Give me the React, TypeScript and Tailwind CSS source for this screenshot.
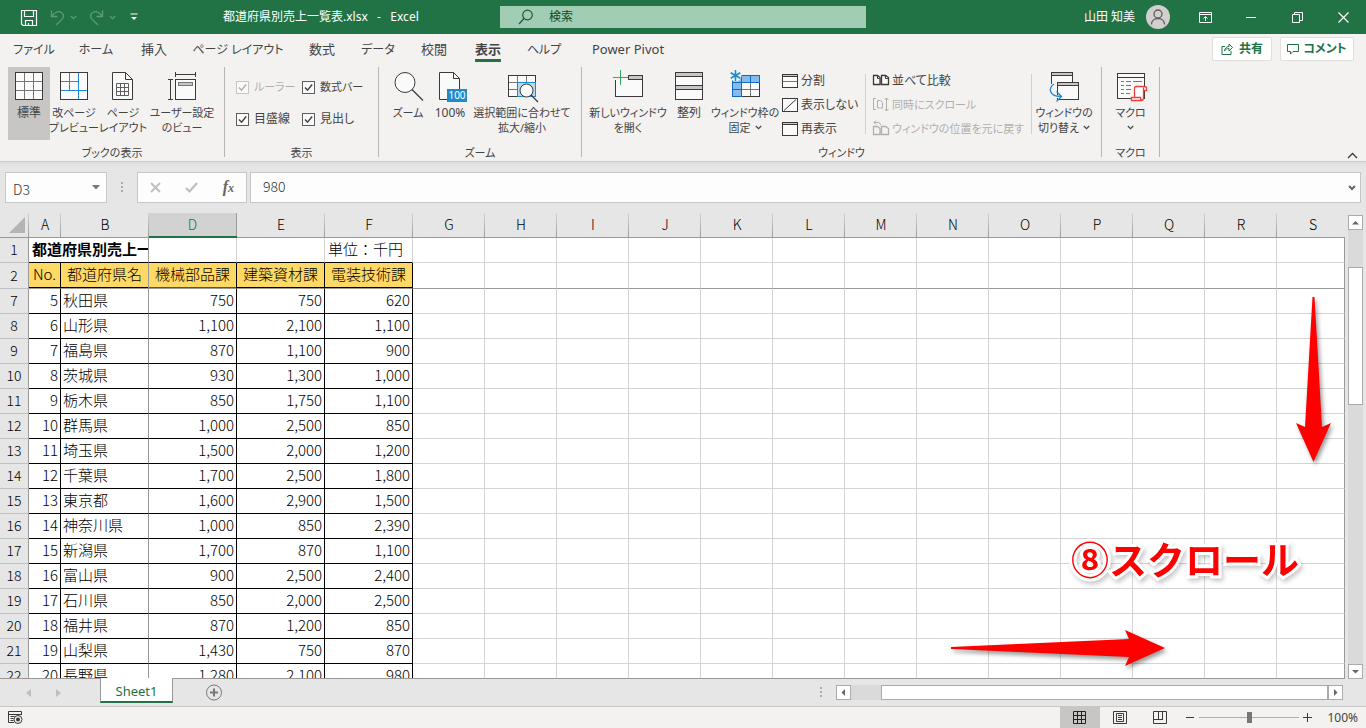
import React from 'react'

type Children = { children?: React.ReactNode }

const columns = ['G', 'H', 'I', 'J', 'K', 'L', 'M', 'N', 'O', 'P', 'Q', 'R', 'S']

const rows: [number, number, string, string, string, string][] = [
  [7, 5, '秋田県', '750', '750', '620'],
  [8, 6, '山形県', '1,100', '2,100', '1,100'],
  [9, 7, '福島県', '870', '1,100', '900'],
  [10, 8, '茨城県', '930', '1,300', '1,000'],
  [11, 9, '栃木県', '850', '1,750', '1,100'],
  [12, 10, '群馬県', '1,000', '2,500', '850'],
  [13, 11, '埼玉県', '1,500', '2,000', '1,200'],
  [14, 12, '千葉県', '1,700', '2,500', '1,800'],
  [15, 13, '東京都', '1,600', '2,900', '1,500'],
  [16, 14, '神奈川県', '1,000', '850', '2,390'],
  [17, 15, '新潟県', '1,700', '870', '1,100'],
  [18, 16, '富山県', '900', '2,500', '2,400'],
  [19, 17, '石川県', '850', '2,000', '2,500'],
  [20, 18, '福井県', '870', '1,200', '850'],
  [21, 19, '山梨県', '1,430', '750', '870'],
  [22, 20, '長野県', '1,280', '2,100', '980'],
]

const tabs = [
  { name: 'ファイル', size: 'w-16 text-[12px]/8' },
  { name: 'ホーム', size: 'w-15 text-[12px]/8' },
  { name: '挿入', size: 'w-14 text-[13px]/[30px]' },
  { name: 'ページ レイアウト', size: 'w-28 text-[12px]/8' },
  { name: '数式', size: 'w-14 text-[13px]/[30px]' },
  { name: 'データ', size: 'w-14 text-[12px]/8' },
  { name: '校閲', size: 'w-14 text-[13px]/[30px]' },
  { name: '表示', size: 'w-13 text-[13px]/[30px]', active: true },
  { name: 'ヘルプ', size: 'w-15 text-[12px]/8' },
  { name: 'Power Pivot', size: 'w-27 text-[13px]/[30px]' },
]

const Icon = ({ w, h, className = '', children }: Children & { w: number; h: number; className?: string }) => (
  <svg width={w} height={h} viewBox={`0 0 ${w} ${h}`} fill="none" stroke="#3b3a39" className={`shrink-0 overflow-visible ${className}`} aria-hidden="true">
    {children}
  </svg>
)

const Chevron = ({ className = '' }: { className?: string }) => (
  <Icon w={7} h={5} className={className}>
    <path d="M.8 1l2.700 2.600L6.200 1" stroke="currentColor" strokeWidth="1.200" />
  </Icon>
)

/* Ribbon icons */

const NormalIcon = () => (
  <Icon w={28} h={28}>
    <rect x=".5" y=".5" width="27" height="27" fill="#fafafa" />
    <path d="M9.500 1v26M18.500 1v26M1 9.500h26M1 18.500h26" stroke="#797774" />
    <rect x=".5" y=".5" width="27" height="27" />
  </Icon>
)

const PageBreakIcon = () => (
  <Icon w={28} h={28}>
    <rect x=".5" y=".5" width="27" height="27" fill="#fafafa" />
    <path d="M9.500 1v17M1 9.500h17" stroke="#797774" />
    <path d="M18.500 1v26M1 18.500h26" stroke="#1e8bcd" />
  </Icon>
)

const PageLayoutIcon = () => (
  <Icon w={22} h={28}>
    <path d="M.5.5h13l7 7v20H.5z" fill="#fafafa" />
    <path d="M13.500.5v7h7" />
    <path d="M4.500 11.500h12v12h-12zM8.500 11.500v12M12.500 11.500v12M4.500 15.500h12M4.500 19.500h12" stroke="#605e5c" />
  </Icon>
)

const CustomViewIcon = () => (
  <Icon w={28} h={28}>
    <path d="M7.500 0v5M27.500 0v5M7.500 2.500h20M0 7.500h5M0 27.500h5M2.500 7.500v20" />
    <rect x="7.500" y="7.500" width="20" height="20" fill="#fafafa" />
    <rect x="10.500" y="10.500" width="14" height="3" fill="#c8c6c4" stroke="#797774" />
  </Icon>
)

const ZoomIcon = () => (
  <Icon w={28} h={28}>
    <circle cx="11" cy="10.500" r="10" fill="#fafafa" />
    <path d="M18 17.500l11 11" strokeWidth="1.300" />
  </Icon>
)

const Zoom100Icon = () => (
  <Icon w={34} h={28}>
    <path d="M6.500.5h14l6 6v21h-20z" fill="#fafafa" />
    <path d="M20.500.5v6h6" />
    <rect x="14" y="17" width="20" height="13" fill="#1e8bcd" stroke="none" />
    <text x="24" y="27" textAnchor="middle" fontSize="10" fill="#fff" stroke="none">100</text>
  </Icon>
)

const ZoomSelectionIcon = () => (
  <Icon w={28} h={22}>
    <rect x=".5" y=".5" width="27" height="21" fill="#fafafa" />
    <path d="M9.500 1v21M18.500 1v21M1 7.500h27M1 14.500h27" stroke="#797774" />
    <rect x="9.500" y="7.500" width="18" height="14" fill="#b9d8ee" stroke="#1e8bcd" />
    <path d="M9 21.500H.5V.5h27V7" />
    <circle cx="18.500" cy="15.500" r="6.500" fill="#fafafa" />
    <path d="M23 20l7 7" strokeWidth="1.300" />
  </Icon>
)

const NewWindowIcon = () => (
  <Icon w={30} h={32}>
    <rect x="2.500" y="5.500" width="27" height="21" fill="#fafafa" />
    <rect x="15.500" y="5.500" width="14" height="4" fill="#c8c6c4" />
    <path d="M0 1h15v9H0z" fill="#f3f2f1" stroke="none" />
    <path d="M7.500 0v15M0 7.500h15" stroke="#37a660" />
  </Icon>
)

const ArrangeIcon = () => (
  <Icon w={28} h={28}>
    <rect x=".5" y=".5" width="27" height="13" fill="#fafafa" />
    <rect x=".5" y="13.500" width="27" height="14" fill="#fafafa" />
    <rect x=".5" y=".5" width="27" height="4" fill="#c8c6c4" />
    <rect x=".5" y="13.500" width="27" height="4" fill="#c8c6c4" />
  </Icon>
)

const FreezeIcon = () => (
  <Icon w={30} h={32}>
    <rect x="2.500" y="5.500" width="27" height="21" fill="#fafafa" />
    <path d="M11.500 12v15M20.500 12v15M12 19.500h18" stroke="#797774" />
    <path d="M2.500 5.500h27v7h-18v14h-9z" fill="#83bcec" stroke="#0f6cbd" />
    <path d="M11.500 5v7M20.500 5v7M2 12.500h9M2 19.500h9" stroke="#0f6cbd" />
    <path d="M29.500 13v13.500H12" />
    <circle cx="5.500" cy="5.500" r="6" fill="#f3f2f1" stroke="none" />
    <path d="M5.500 0v11M.7 2.700l9.600 5.600M.7 8.300l9.600-5.600" stroke="#1e8bcd" strokeWidth="1.600" />
  </Icon>
)

const SwitchIcon = () => (
  <Icon w={30} h={28}>
    <rect x="2.500" y=".5" width="21" height="19" fill="#fafafa" stroke="none" />
    <path d="M2.500 12V.5h21V10" />
    <rect x="2.500" y=".5" width="21" height="3" fill="#c8c6c4" />
    <rect x="8.500" y="10.500" width="21" height="17" fill="#fafafa" />
    <rect x="8.500" y="10.500" width="21" height="3" fill="#c8c6c4" />
    <path d="M5 12c-6 4-5 13 7 12.500" stroke="#f3f2f1" strokeWidth="3" />
    <path d="M5 12c-6 4-5 12.500 7 12.500M7.500 19.500l5 5-5 5" stroke="#1e8bcd" strokeWidth="1.300" />
  </Icon>
)

const MacroIcon = () => (
  <Icon w={28} h={28}>
    <rect x=".5" y="1.500" width="27" height="25" fill="#fafafa" />
    <path d="M1 5.500h27" />
    <path d="M4 9.500h3M9 9.500h5M16 9.500h9M4 13.500h3M9 13.500h5M4 17.500h3M9 17.500h5M4 21.500h3M9 21.500h4" stroke="#797774" />
    <path d="M17.500 25.500V16.500q0-2 2-2h8q2 0 2 2v2h-3v7q0 3-2 3h-10v-3h9q0 3 2 3M26.500 18.500v-3" fill="#fff" stroke="#e8413c" strokeWidth="1.300" />
  </Icon>
)

const SplitIcon = () => (
  <Icon w={16} h={14}>
    <rect x=".5" y=".5" width="15" height="13" fill="#fafafa" />
    <path d="M1 1.500h14" stroke="#c8c6c4" />
    <path d="M1 2.500h14" />
    <path d="M1 7.500h14" stroke="#797774" />
  </Icon>
)

const HideIcon = () => (
  <Icon w={16} h={14}>
    <rect x=".5" y=".5" width="15" height="13" fill="#fafafa" />
    <path d="M2 12.500L14 1.500" />
  </Icon>
)

const UnhideIcon = () => (
  <Icon w={16} h={14}>
    <rect x=".5" y=".5" width="15" height="13" fill="#fafafa" />
    <path d="M1 1.500h14" stroke="#c8c6c4" />
    <path d="M1 2.500h14" />
  </Icon>
)

const SideBySideIcon = () => (
  <Icon w={16} h={14}>
    <path d="M.5 1.500h4l2.500 2v7H.5zM8.500 1.500h4l3 2v7h-7z" fill="#fafafa" strokeWidth="1.300" />
    <path d="M4.500 1.500v3h2M12.500 1.500v3h3" />
  </Icon>
)

const SyncScrollIcon = () => (
  <Icon w={16} h={16}>
    <path d="M3 1.500H.5v11H3M4.500 3.500h3l2 2v5.500h-5zM13.500 1v13M11.500 3l2-2 2 2M11.500 12l2 2 2-2" stroke="#b1afad" />
  </Icon>
)

const ResetIcon = () => (
  <Icon w={16} h={16}>
    <path d="M.5 5.500h4l2.500 2v6H.5zM8.500 5.500h4l3 2v6h-7z" stroke="#b1afad" strokeWidth="1.300" />
    <path d="M1 1.500h4q2.500 0 2.500 2.500M3-.5l-2 2 2 2" stroke="#b1afad" />
  </Icon>
)

/* Ribbon parts */

const Group = ({ label, className, children }: Children & { label: string; className: string }) => (
  <section className={`flex h-[90px] shrink-0 flex-col border-r border-[#b8b6b4] ${className}`}>
    <div className="flex h-[78px] shrink-0">{children}</div>
    <h2 className="text-center text-[11px] leading-4 whitespace-nowrap">{label}</h2>
  </section>
)

const BigButton = ({ icon, lines, size, active, menu }: { icon: React.ReactNode; lines: string[]; size: string; active?: boolean; menu?: boolean }) => (
  <button className={`flex h-[73px] shrink-0 flex-col items-center pt-[3px] ${size} ${active ? 'bg-[#c8c6c4]' : ''}`}>
    <span className="flex h-8 items-center justify-center">{icon}</span>
    {lines.map((line, i) => (
      <span key={line} className={`flex h-[15px] items-center gap-1 leading-[15px] whitespace-nowrap ${i === 0 ? 'mt-[3px]' : ''}`}>
        {line}
        {menu && i === lines.length - 1 && <Chevron />}
      </span>
    ))}
  </button>
)

const SmallButton = ({ icon, label, disabled }: { icon: React.ReactNode; label: string; disabled?: boolean }) => (
  <button disabled={disabled} className="flex h-6 items-center gap-[3px] text-[12px] leading-6 whitespace-nowrap disabled:text-[11px] disabled:text-[#b1afad]">
    {icon}
    {label}
  </button>
)

const Check = ({ label, size, disabled }: { label: string; size: string; disabled?: boolean }) => (
  <label className={`flex h-8 items-center gap-[5px] whitespace-nowrap ${size} ${disabled ? 'text-[#b1afad]' : ''}`}>
    <span className="grid shrink-0">
      <input
        type="checkbox"
        defaultChecked
        disabled={disabled}
        className="col-start-1 row-start-1 size-[13px] appearance-none border border-[#605e5c] bg-[#fafafa] disabled:border-[#c8c6c4]"
      />
      <svg viewBox="0 0 13 13" className="pointer-events-none col-start-1 row-start-1 size-[13px]" fill="none" stroke="currentColor" strokeWidth="1.500">
        <path d="M3 6.500L5.500 9.200 10.200 3.500" />
      </svg>
    </span>
    {label}
  </label>
)

const TitleBar = () => (
  <header className="flex h-[34px] shrink-0 items-center bg-[#217346] text-white">
    <div className="flex w-[500px] shrink-0 items-center">
      <button aria-label="上書き保存" className="ml-5">
        <Icon w={17} h={17}>
          <path d="M1.500 1.500h15v15H3l-1.500-1.500zM4.500 1.500v6h9v-6M5.500 16.500v-5h7v5M8.500 16v-2" stroke="#fff" strokeWidth="1.200" />
        </Icon>
      </button>
      <button aria-label="元に戻す" className="ml-3 flex items-center gap-1 text-[#5d9c78]">
        <Icon w={17} h={17}>
          <path d="M2.500 1.500v6h6M3 7q4.500-5.500 8.500-4 4 2 2.500 6-.5 1-7 7" stroke="currentColor" strokeWidth="1.300" />
        </Icon>
        <Chevron />
      </button>
      <button aria-label="やり直し" className="ml-[11px] flex items-center gap-1 text-[#5d9c78]">
        <Icon w={17} h={17}>
          <path d="M14.500 1.500v6h-6M14 7Q9.500 1.500 5.500 3q-4 2-2.500 6 .5 1 7 7" stroke="currentColor" strokeWidth="1.300" />
        </Icon>
        <Chevron />
      </button>
      <button aria-label="クイック アクセス ツール バー" className="ml-3.5">
        <Icon w={8} h={8}>
          <path d="M.5 1h7" stroke="#fff" />
          <path d="M1 4l3 3 3-3z" fill="#fff" stroke="none" />
        </Icon>
      </button>
      <h1 className="ml-[85px] text-[12px] leading-4 whitespace-pre">都道府県別売上一覧表.xlsx   -   Excel</h1>
    </div>
    <label className="flex h-[22px] flex-1 items-center bg-[#a0cdb4] pl-[18px]">
      <Icon w={16} h={16}>
        <circle cx="9.500" cy="6" r="4.800" stroke="#185c37" strokeWidth="1.200" />
        <path d="M6 9.500L1 15" stroke="#185c37" strokeWidth="1.200" />
      </Icon>
      <input type="text" placeholder="検索" aria-label="検索" className="ml-[15px] w-full bg-transparent text-[12px] leading-5 outline-none placeholder:text-[#0e4a29]" />
    </label>
    <div className="flex w-[500px] shrink-0 items-center justify-end">
      <span className="text-[12px] leading-4 whitespace-nowrap">山田 知美</span>
      <Icon w={24} h={24} className="ml-[11px]">
        <circle cx="12" cy="12" r="12" fill="#d2d0ce" stroke="none" />
        <circle cx="12" cy="9" r="4" stroke="#605e5c" strokeWidth="1.300" />
        <path d="M5.500 19.500c0-8 13-8 13 0" stroke="#605e5c" strokeWidth="1.300" />
      </Icon>
      <button aria-label="リボンの表示オプション" className="ml-3 flex w-[46px] justify-center">
        <Icon w={13} h={11}>
          <path d="M.5.5h12v10H.5zM1 2.500h11M6.500 9V4.500M4.500 6.500l2-2 2 2" stroke="#fff" />
        </Icon>
      </button>
      <button aria-label="最小化" className="flex w-[46px] justify-center">
        <Icon w={11} h={11}><path d="M0 5.500h10" stroke="#fff" /></Icon>
      </button>
      <button aria-label="元に戻す (縮小)" className="flex w-[46px] justify-center">
        <Icon w={11} h={11}><path d="M.5 2.500h7v8h-7zM2.500 2V.5h8v8H8" stroke="#fff" /></Icon>
      </button>
      <button aria-label="閉じる" className="flex w-[46px] justify-center">
        <Icon w={11} h={11}><path d="M.5.5l10 10M10.500.5l-10 10" stroke="#fff" strokeWidth="1.200" /></Icon>
      </button>
    </div>
  </header>
)

const Tabs = () => (
  <nav className="flex h-[33px] shrink-0 pl-0.5">
    {tabs.map((tab) => (
      <button key={tab.name} className={`flex h-7 shrink-0 justify-center ${tab.size}`}>
        <span className={`h-7 whitespace-nowrap ${tab.active ? 'border-b-3 border-[#217346] font-bold' : ''}`}>{tab.name}</span>
      </button>
    ))}
    <div className="ml-auto flex h-6 gap-2 pt-[3px] pr-3 text-[12px] font-bold text-[#217346]">
      <button className="flex h-6 w-[60px] items-center justify-center gap-1.5 rounded-xs border border-[#e1dfdd] bg-white">
        <Icon w={12} h={12}>
          <path d="M4 3.500H1v8h9V8M3.500 8c.5-3 2-4.500 4.500-4.500V1L11.500 4.500 8 8V5.500C6 5.500 4.500 6 3.500 8z" stroke="#217346" />
        </Icon>
        共有
      </button>
      <button className="flex h-6 w-[74px] items-center justify-center gap-1 rounded-xs border border-[#e1dfdd] bg-white whitespace-nowrap">
        <Icon w={12} h={12}>
          <path d="M.5 1.500h11v7H6L3.500 11V8.500h-3z" stroke="#217346" />
        </Icon>
        コメント
      </button>
    </div>
  </nav>
)

const Ribbon = () => (
  <div className="flex h-[95px] shrink-0 border-b border-[#cfcdcb]">
    <Group label="ブックの表示" className="w-[225px] px-2">
      <BigButton icon={<NormalIcon />} lines={['標準']} size="w-[42px] text-[12px]" active />
      <BigButton icon={<PageBreakIcon />} lines={['改ページ', 'プレビュー']} size="w-12 text-[11px]" />
      <BigButton icon={<PageLayoutIcon />} lines={['ページ', 'レイアウト']} size="w-[50px] text-[11px]" />
      <BigButton icon={<CustomViewIcon />} lines={['ユーザー設定', 'のビュー']} size="w-17 text-[11px]" />
    </Group>
    <Group label="表示" className="w-[154px]">
      <div className="grid grid-cols-[66px_66px] content-start pt-1 pl-[11px]">
        <Check label="ルーラー" size="text-[11px]" disabled />
        <Check label="数式バー" size="text-[11px]" />
        <Check label="目盛線" size="text-[12px]" />
        <Check label="見出し" size="text-[12px]" />
      </div>
    </Group>
    <Group label="ズーム" className="w-[203px]">
      <span className="w-2" />
      <BigButton icon={<ZoomIcon />} lines={['ズーム']} size="w-[42px] text-[11px]" />
      <BigButton icon={<Zoom100Icon />} lines={['100%']} size="w-[42px] text-[12px]" />
      <BigButton icon={<ZoomSelectionIcon />} lines={['選択範囲に合わせて', '拡大/縮小']} size="w-[102px] text-[11px]" />
    </Group>
    <Group label="ウィンドウ" className="w-[520px]">
      <span className="w-2.5" />
      <BigButton icon={<NewWindowIcon />} lines={['新しいウィンドウ', 'を開く']} size="w-18 text-[11px]" />
      <BigButton icon={<ArrangeIcon />} lines={['整列']} size="w-[50px] text-[12px]" />
      <BigButton icon={<FreezeIcon />} lines={['ウィンドウ枠の', '固定']} size="w-[62px] text-[11px]" menu />
      <div className="ml-1.5 w-[83px] pt-0.5">
        <SmallButton icon={<SplitIcon />} label="分割" />
        <SmallButton icon={<HideIcon />} label="表示しない" />
        <SmallButton icon={<UnhideIcon />} label="再表示" />
      </div>
      <div className="mt-[7px] h-[60px] border-l border-[#d2d0ce]" />
      <div className="w-[158px] pt-0.5 pl-[7px]">
        <SmallButton icon={<SideBySideIcon />} label="並べて比較" />
        <SmallButton icon={<SyncScrollIcon />} label="同時にスクロール" disabled />
        <SmallButton icon={<ResetIcon />} label="ウィンドウの位置を元に戻す" disabled />
      </div>
      <div className="mt-[7px] mr-0.5 ml-[7px] h-[60px] border-l border-[#d2d0ce]" />
      <BigButton icon={<SwitchIcon />} lines={['ウィンドウの', '切り替え']} size="w-15 text-[11px]" menu />
    </Group>
    <Group label="マクロ" className="w-[58px]">
      <button className="flex h-[73px] w-full flex-col items-center pt-[3px]">
        <span className="flex h-8 items-center"><MacroIcon /></span>
        <span className="mt-[3px] text-[11px] leading-[15px]">マクロ</span>
        <Chevron className="mt-[5px]" />
      </button>
    </Group>
    <button aria-label="リボンを折りたたむ" className="mr-2 ml-auto self-end pb-0.5">
      <Icon w={11} h={7}><path d="M1 6l4.500-4.500L10 6" strokeWidth="1.300" /></Icon>
    </button>
  </div>
)

const Dots = ({ className = '' }: { className?: string }) => (
  <Icon w={2} h={10} className={className}>
    <path d="M0 0h2v2H0zM0 4h2v2H0zM0 8h2v2H0z" fill="#ababab" stroke="none" />
  </Icon>
)

const FormulaBar = () => (
  <div className="flex h-[51px] shrink-0 bg-linear-to-b from-[#dddddd] to-[#e6e6e6] to-10% pt-2.5 pr-[5px] pl-[5px] text-[#333]">
    <label className="flex h-[31px] w-[102px] shrink-0 items-center border border-[#c6c6c6] bg-[#fdfdfd] pr-1.5 pl-[7px]">
      <input type="text" defaultValue="D3" aria-label="名前ボックス" className="w-full min-w-0 bg-transparent pt-0.5 font-['Noto_Sans_CJK_JP',sans-serif] text-[14px] leading-6 font-light outline-none" />
      <Icon w={8} h={5}><path d="M0 0h8L4 4.500z" fill="#777" stroke="none" /></Icon>
    </label>
    <Dots className="mt-2.5 ml-3.5" />
    <div className="ml-3.5 flex h-[31px] w-[110px] shrink-0 items-center justify-between border border-[#c6c6c6] bg-[#fdfdfd] pr-3 pl-3">
      <button aria-label="キャンセル">
        <Icon w={11} h={11}><path d="M1 1l9 9M10 1l-9 9" stroke="#bebebe" strokeWidth="1.800" /></Icon>
      </button>
      <button aria-label="入力">
        <Icon w={13} h={11}><path d="M1 6l3.500 3.500L12 1" stroke="#bebebe" strokeWidth="2.200" /></Icon>
      </button>
      <button aria-label="関数の挿入" className="font-['Liberation_Serif',serif] text-[16px] leading-5 font-bold text-[#666] italic">
        f<span className="text-[12px]">x</span>
      </button>
    </div>
    <label className="ml-[3px] flex h-[31px] flex-1 items-center border border-[#c6c6c6] bg-[#fdfdfd] pr-1 pl-3">
      <input type="text" defaultValue="980" aria-label="数式バー" className="w-full bg-transparent pb-1 font-['Noto_Sans_CJK_JP',sans-serif] text-[14px] leading-6 font-light outline-none" />
      <Icon w={8} h={6}><path d="M1 1l3 3 3-3" stroke="#666" strokeWidth="2" /></Icon>
    </label>
  </div>
)

const colHead = 'h-[25px] border-b border-[#999] bg-[#e6e6e6] p-0 font-light'
const divider = 'h-6 bg-linear-to-b from-[#d4d4d4] to-[#9b9b9b] bg-[length:1px_100%] bg-right bg-no-repeat'
const rowHead = 'border-r border-b border-r-[#999] border-b-[#c0c0c0] bg-[#e6e6e6] p-0 pb-0.5 text-center text-[14px] font-light'
const fieldHead = 'border-r border-b border-b-[#999] bg-[#ffd966] p-0 pb-[3px] text-center font-light whitespace-nowrap'
const titleCell = 'h-[25px] border-r border-b border-b-black p-0 pb-0.5 pl-[3px] whitespace-nowrap'
const cell = 'h-[25px] border-r border-b border-black p-0 pb-0.5'

const EmptyCells = ({ className = 'border-b-[#d4d4d4]' }: { className?: string }) => (
  <>
    {columns.map((c) => (
      <td key={c} className={`border-r border-b border-r-[#d4d4d4] p-0 last:border-r-[#999] ${className}`} />
    ))}
  </>
)

const Sheet = () => (
  <table className="w-full table-fixed border-separate border-spacing-0 bg-white font-['Noto_Sans_CJK_JP',sans-serif] text-[15px] leading-[22px] font-light text-black [font-feature-settings:normal]">
    <colgroup>
      <col className="w-[29px]" />
      <col className="w-8" />
      <col className="w-[88px]" />
      <col className="w-[88px]" />
      <col className="w-[88px]" />
      <col className="w-[88px]" />
      {columns.slice(0, -1).map((c) => (
        <col key={c} className="w-[72px]" />
      ))}
      <col />
    </colgroup>
    <thead className="text-[14px]">
      <tr>
        <th className={colHead}>
          <div className={`${divider} flex items-end justify-end p-1`}>
            <Icon w={16} h={16}><path d="M16 0v16H0z" fill="#b4b4b4" stroke="none" /></Icon>
          </div>
        </th>
        {['A', 'B'].map((c) => (
          <th key={c} className={colHead}><div className={divider}>{c}</div></th>
        ))}
        <th className="h-[25px] border-b-2 border-[#217346] bg-[#d2d2d2] p-0 font-light text-[#217346]">
          <div className="h-[23px] border-r border-[#9b9b9b]">D</div>
        </th>
        {['E', 'F', ...columns.slice(0, -1)].map((c) => (
          <th key={c} className={colHead}><div className={divider}>{c}</div></th>
        ))}
        <th className={colHead}><div className="h-6 pl-1">S</div></th>
      </tr>
    </thead>
    <tbody>
      <tr>
        <th className={rowHead}>1</th>
        <td colSpan={2} className={`${titleCell} overflow-hidden border-r-[#999] font-bold`}>都道府県別売上一</td>
        <td className={`${titleCell} border-r-[#d4d4d4]`} />
        <td className={`${titleCell} border-r-[#d4d4d4]`} />
        <td className={`${titleCell} border-r-[#d4d4d4]`}>単位：千円</td>
        <EmptyCells />
      </tr>
      <tr className="h-[26px]">
        <th className={`${rowHead} border-b-[#999]`}>2</th>
        <th className={`${fieldHead} border-r-black shadow-[inset_0_-1px_0_#000]`}>No.</th>
        <th className={`${fieldHead} border-r-[#999] shadow-[inset_0_-1px_0_#000]`}>都道府県名</th>
        <th className={`${fieldHead} border-r-black shadow-[inset_0_-1px_0_#217346]`}>機械部品課</th>
        <th className={`${fieldHead} border-r-black shadow-[inset_0_-1px_0_#000]`}>建築資材課</th>
        <th className={`${fieldHead} border-r-black shadow-[inset_0_-1px_0_#000]`}>電装技術課</th>
        <EmptyCells className="border-b-[#999]" />
      </tr>
      {rows.map(([row, no, name, d, e, f]) => (
        <tr key={row}>
          <th className={rowHead}>{row}</th>
          <td className={`${cell} pr-0.5 text-right`}>{no}</td>
          <td className={`${cell} border-r-[#999] pl-0.5`}>{name}</td>
          <td className={`${cell} pr-0.5 text-right`}>{d}</td>
          <td className={`${cell} pr-0.5 text-right`}>{e}</td>
          <td className={`${cell} pr-0.5 text-right`}>{f}</td>
          <EmptyCells />
        </tr>
      ))}
    </tbody>
  </table>
)

const ScrollButton = ({ label, d }: { label: string; d: string }) => (
  <button aria-label={label} className="flex size-[15px] shrink-0 items-center justify-center border border-[#ababab] bg-white">
    <Icon w={9} h={9}><path d={d} fill="#666" stroke="none" /></Icon>
  </button>
)

const VerticalScroll = () => (
  <div className="flex w-[21px] shrink-0 flex-col bg-[#e6e6e6] px-[3px] pt-0.5">
    <ScrollButton label="上へ" d="M1 6.500h7L4.500 3z" />
    <div className="flex-1 bg-[#dadada] pt-[37px]">
      <div className="h-[138px] border border-[#ababab] bg-white" />
    </div>
    <ScrollButton label="下へ" d="M1 3h7L4.500 6.500z" />
  </div>
)

/* Red callouts drawn over the empty part of the sheet */
const Callouts = () => (
  <>
    <svg className="absolute top-[82px] right-[10px] drop-shadow-[2px_3px_2px_rgba(0,0,0,0.4)]" width="42" height="170" viewBox="0 0 42 170" aria-hidden="true">
      <path d="M19.500 2h2L29 132l9-4-17.500 39L3 128l9 4z" fill="#f00" />
    </svg>
    <p className="absolute right-[46px] bottom-[92px] font-['Noto_Sans_CJK_JP',sans-serif] text-[38px] leading-14 font-bold whitespace-nowrap text-[#f00] drop-shadow-[2px_3px_2px_rgba(0,0,0,0.2)] [-webkit-text-stroke:6px_white] [font-feature-settings:normal] [paint-order:stroke_fill]">
      ⑧スクロール
    </p>
    <svg className="absolute right-[177px] bottom-[8px] drop-shadow-[2px_3px_2px_rgba(0,0,0,0.4)]" width="220" height="44" viewBox="0 0 220 44" aria-hidden="true">
      <path d="M3 21l178-8-4-9 40 18-40 18 4-9L3 23z" fill="#f00" />
    </svg>
  </>
)

const SheetTabs = () => (
  <div className="flex h-[27px] shrink-0 bg-[#e6e6e6]">
    <div className="flex w-[100px] shrink-0 items-center gap-[25px] pl-[26px]">
      <button aria-label="前のシート"><Icon w={5} h={8}><path d="M5 0v8L0 4z" fill="#bebebe" stroke="none" /></Icon></button>
      <button aria-label="次のシート"><Icon w={5} h={8}><path d="M0 0v8l5-4z" fill="#bebebe" stroke="none" /></Icon></button>
    </div>
    <button className="relative -mt-px h-[25px] w-[73px] shrink-0 border-x border-b-2 border-x-[#999] border-b-[#217346] bg-white pt-0.5 text-[13px] leading-5 text-[#217346]">Sheet1</button>
    <button aria-label="新しいシート" className="ml-8">
      <Icon w={18} h={18}>
        <circle cx="9" cy="8.500" r="7.500" stroke="#777" />
        <path d="M9 4.500v8M5 8.500h8" stroke="#777" strokeWidth="2" />
      </Icon>
    </button>
    <div className="ml-auto flex w-[546px] shrink-0 pt-1.5">
      <Dots className="mt-0.5 mr-3.5" />
      <ScrollButton label="左へ" d="M6 1v7L2.500 4.500z" />
      <div className="flex h-[15px] w-[477px] bg-[#dadada] pl-[30px]">
        <div className="flex-1 border border-[#ababab] bg-white" />
      </div>
      <ScrollButton label="右へ" d="M3 1v7l3.500-3.500z" />
    </div>
  </div>
)

const StatusBar = () => (
  <footer className="flex h-[22px] shrink-0 items-center border-t border-[#c6c6c6] bg-[#f3f2f1] text-[12px]">
    <button aria-label="マクロの記録" className="ml-2">
      <Icon w={15} h={13}>
        <path d="M6 11.500H.5V.5h13V4M1 3.500h12M2.500 5.500h4M2.500 7.500h3M2.500 9.500h3" />
        <circle cx="10" cy="8.500" r="4" />
        <circle cx="10" cy="8.500" r="2" fill="#3b3a39" stroke="none" />
      </Icon>
    </button>
    <button aria-label="標準" className="ml-auto flex h-[21px] w-10 items-center justify-center bg-[#c8c6c4]">
      <Icon w={14} h={13}><path d="M.5.5h12v12H.5zM4.500 0v13M8.500 0v13M0 4.500h13M0 8.500h13" stroke="#222" /></Icon>
    </button>
    <button aria-label="ページ レイアウト" className="flex h-[21px] w-10 items-center justify-center">
      <Icon w={14} h={13}><path d="M.5.5h13v12H.5zM3.500 2.500h7v8h-7zM5 4.500h4M5 6.500h4M5 8.500h4" /></Icon>
    </button>
    <button aria-label="改ページ プレビュー" className="flex h-[21px] w-10 items-center justify-center">
      <Icon w={14} h={13}><path d="M.5.5h13v12H.5zM5.500 1v7M9.500 1v7M1 8.500h9" /></Icon>
    </button>
    <button aria-label="縮小" className="ml-1.5"><Icon w={8} h={9}><path d="M0 4.500h8" /></Icon></button>
    <input
      type="range"
      aria-label="ズーム"
      defaultValue={50}
      className="ml-[5px] h-[11px] w-[100px] appearance-none bg-linear-to-b from-[#b1afad] to-[#b1afad] bg-[length:100%_1px] bg-center bg-no-repeat [&::-webkit-slider-thumb]:h-[11px] [&::-webkit-slider-thumb]:w-[5px] [&::-webkit-slider-thumb]:appearance-none [&::-webkit-slider-thumb]:bg-[#777]"
    />
    <button aria-label="拡大" className="ml-1"><Icon w={9} h={9}><path d="M0 4.500h9M4.500 0v9" /></Icon></button>
    <span className="w-[54px] pr-2 text-right leading-5">100%</span>
  </footer>
)

const App = () => {
  return (
    <div className="flex h-screen flex-col overflow-hidden bg-[#f3f2f1] font-['Noto_Sans','Noto_Sans_CJK_JP',sans-serif] text-[#444] [font-feature-settings:'palt']">
      <TitleBar />
      <Tabs />
      <Ribbon />
      <FormulaBar />
      <div className="flex min-h-0 flex-1 bg-[#e6e6e6]">
        <main className="relative min-w-0 flex-1 overflow-hidden border-b border-[#999]">
          <Sheet />
          <Callouts />
        </main>
        <VerticalScroll />
      </div>
      <SheetTabs />
      <StatusBar />
    </div>
  )
}

export default App
